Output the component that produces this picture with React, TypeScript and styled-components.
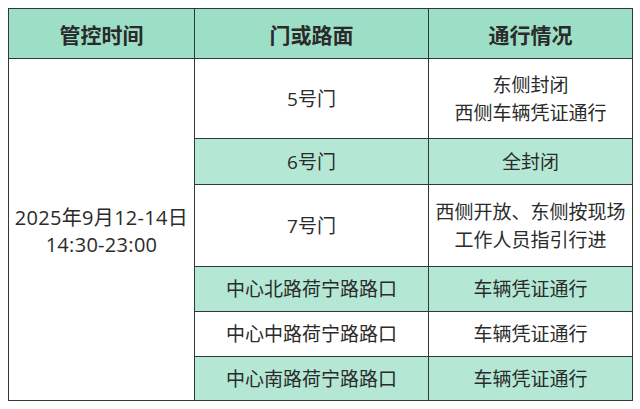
import React from "react";
import styled, { createGlobalStyle } from "styled-components";

const GlobalStyle = createGlobalStyle`
  html, body {
    margin: 0;
    padding: 0;
    background: #ffffff;
  }
  body {
    font-family: "Open Sans", "Noto Sans CJK SC", sans-serif;
    color: #2b2b2b;
  }
`;

const Page = styled.div`
  width: 640px;
  height: 409px;
  padding: 8px 8px 0 8px;
  box-sizing: border-box;
`;

const Table = styled.table`
  width: 624px;
  border-collapse: collapse;
  table-layout: fixed;
  font-size: 19px;
  border: 1.5px solid #2f3a35;
`;

const Row = styled.tr<{ $h: number }>`
  height: ${(p) => p.$h}px;
`;

const HeadCell = styled.th`
  background: #9ddfc6;
  font-weight: 700;
  font-size: 21px;
  color: #2a2a2a;
  border: 1.5px solid #2f3a35;
  padding: 0;
  text-align: center;
  vertical-align: middle;
`;

const Cell = styled.td<{ $green?: boolean }>`
  background: ${(p) => (p.$green ? "#b4e8d5" : "#ffffff")};
  border: 1.5px solid #2f3a35;
  padding: 0;
  text-align: center;
  vertical-align: middle;
  line-height: 28px;
  color: #2b2b2b;
`;

const TimeCell = styled(Cell)`
  font-size: 20px;
  letter-spacing: 0.3px;
  line-height: 27px;
  padding-top: 2px;
`;

const rows = [
  { gate: "5号门", status: ["东侧封闭", "西侧车辆凭证通行"], h: 80, green: false },
  { gate: "6号门", status: ["全封闭"], h: 46, green: true },
  { gate: "7号门", status: ["西侧开放、东侧按现场", "工作人员指引行进"], h: 82, green: false },
  { gate: "中心北路荷宁路路口", status: ["车辆凭证通行"], h: 45, green: true },
  { gate: "中心中路荷宁路路口", status: ["车辆凭证通行"], h: 45, green: false },
  { gate: "中心南路荷宁路路口", status: ["车辆凭证通行"], h: 44, green: true },
];

function App() {
  return (
    <Page>
      <GlobalStyle />
      <Table>
        <colgroup>
          <col style={{ width: 186 }} />
          <col style={{ width: 234 }} />
          <col style={{ width: 204 }} />
        </colgroup>
        <thead>
          <Row $h={50}>
            <HeadCell>管控时间</HeadCell>
            <HeadCell>门或路面</HeadCell>
            <HeadCell>通行情况</HeadCell>
          </Row>
        </thead>
        <tbody>
          {rows.map((r, i) => (
            <Row $h={r.h} key={r.gate}>
              {i === 0 && (
                <TimeCell rowSpan={rows.length}>
                  2025年9月12-14日
                  <br />
                  14:30-23:00
                </TimeCell>
              )}
              <Cell $green={r.green}>{r.gate}</Cell>
              <Cell $green={r.green}>
                {r.status.map((s, j) => (
                  <React.Fragment key={s}>
                    {j > 0 && <br />}
                    {s}
                  </React.Fragment>
                ))}
              </Cell>
            </Row>
          ))}
        </tbody>
      </Table>
    </Page>
  );
}

export default App;
